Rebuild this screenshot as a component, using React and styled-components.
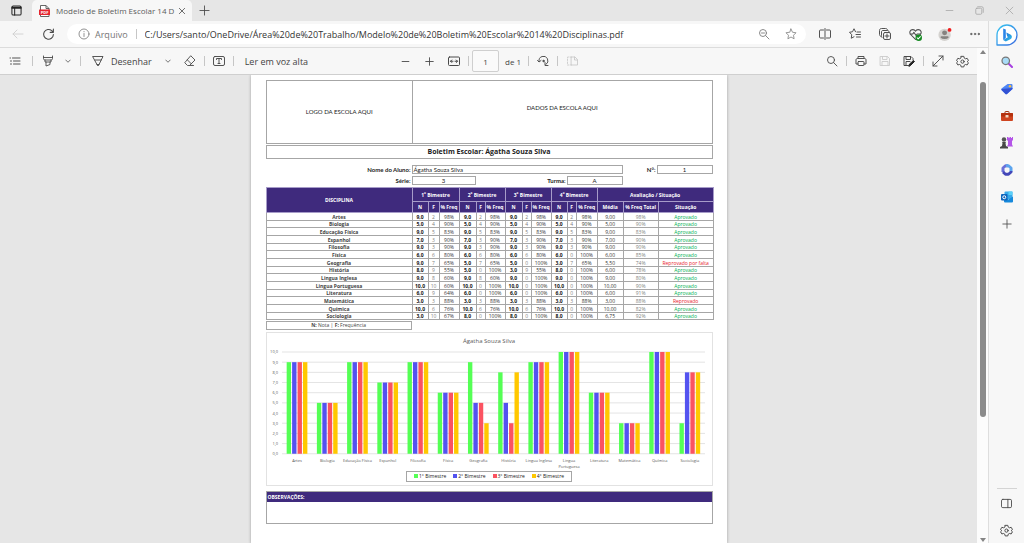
import React, { useState } from "react";
import styled, { createGlobalStyle } from "styled-components";

const purple = "#3f2a7d";
const line = "#a6a6a6";

const GlobalStyle = createGlobalStyle`
  * {
    box-sizing: border-box;
  }
  body {
    margin: 0;
    background: #e6e6e6;
    color: #444;
    font-family: "Open Sans", "Noto Sans", sans-serif;
    font-size: 9px;
  }
  button, input {
    font: inherit;
    color: inherit;
  }
`;

const Window = styled.div`
  display: flex;
  flex-direction: column;
  height: 100vh;
  overflow: hidden;
`;

const TitleBar = styled.header`
  display: flex;
  flex: none;
  height: 21px;
  background: #e6e6e6;
`;

const IconButton = styled.button`
  display: flex;
  flex: none;
  align-items: center;
  justify-content: center;
  width: ${(p) => p.$w || 24}px;
  height: ${(p) => p.$h || 20}px;
  padding: 0;
  border: none;
  background: none;
  color: ${(p) => p.$color || "#4a4a4a"};
`;

const Tab = styled.div`
  display: flex;
  align-items: center;
  min-width: 160px;
  padding: 0 3px 0 7px;
  border-radius: 5px 5px 0 0;
  background: #f7f7f7;
`;

const TabTitle = styled.span`
  margin: 0 auto 0 6px;
  white-space: nowrap;
  font-size: 8px;
  color: #5c5c5c;
`;

const Controls = styled.div`
  display: flex;
  margin-left: auto;
`;

const Body = styled.div`
  display: flex;
  flex: 1;
  min-height: 0;
`;

const Main = styled.div`
  display: flex;
  flex: 1;
  flex-direction: column;
  min-width: 0;
  border-right: 1px solid #dedede;
`;

const AddressRow = styled.div`
  display: flex;
  flex: none;
  align-items: center;
  height: 26px;
  padding: 0 6px 0 3px;
  background: #f7f7f7;
`;

const AddressBox = styled.label`
  display: flex;
  flex: 1;
  align-items: center;
  height: 20px;
  margin: 0 12px 0 4px;
  padding: 0 2px 0 11px;
  border-radius: 10px;
  background: #fff;
`;

const Scheme = styled.span`
  margin: 0 6px 0 5px;
  color: #767676;
`;

const Url = styled.input`
  flex: 1;
  min-width: 0;
  margin-left: 6px;
  padding: 0;
  border: none;
  outline: none;
  background: none;
  color: #333;
`;

const BrowserActions = styled.div`
  display: flex;
  gap: 16px;
`;

const Content = styled.div`
  display: flex;
  flex: 1;
  min-height: 0;
  border-top: 1px solid #dcdcdc;
`;

const Reader = styled.div`
  display: flex;
  flex: 1;
  flex-direction: column;
  min-width: 0;
`;

const Toolbar = styled.div`
  display: flex;
  flex: none;
  align-items: center;
  height: 27px;
  border-bottom: 1px solid #cfcfcf;
  background: #f7f7f7;
`;

const ToolGroup = styled.div`
  display: flex;
  flex: ${(p) => (p.$side ? "1" : "none")};
  align-items: center;
  justify-content: ${(p) => (p.$side === "right" ? "flex-end" : "flex-start")};
  padding-left: ${(p) => (p.$side ? 0 : 4)}px;
  padding-right: ${(p) => (p.$side === "right" ? 3 : 0)}px;
`;

const Split = styled.div`
  display: flex;
  align-items: center;
  margin-right: 3px;
`;

const Sep = styled.i`
  width: 1px;
  height: 10px;
  margin: 0 2px;
  background: #c6c6c6;
`;

const TextButton = styled.button`
  display: flex;
  align-items: center;
  gap: 7px;
  padding: 0 9px;
  border: none;
  background: none;
  white-space: nowrap;
`;

const PageInput = styled.input`
  width: 27px;
  height: 22px;
  margin-left: 1px;
  padding: 0;
  border: 1px solid #cfcfcf;
  border-radius: 2px;
  background: #fafafa;
  text-align: center;
  font-size: 8px;
`;

const PageCount = styled.span`
  padding: 0 5px 0 6px;
  font-size: 8px;
`;

const Viewer = styled.main`
  flex: 1;
  min-height: 0;
  overflow: hidden;
  background: #e6e6e6;
`;

const ScrollTrack = styled.div`
  display: flex;
  flex: none;
  flex-direction: column;
  align-items: center;
  justify-content: space-between;
  width: 11px;
  padding: 2px 0 1px;
  background: #fcfcfc;
  color: #858585;
`;

const ScrollThumb = styled.div`
  width: 6px;
  height: 68%;
  margin: 28px 0 auto;
  border-radius: 3px;
  background: #8b8b8b;
`;

const Sidebar = styled.aside`
  display: flex;
  flex: none;
  flex-direction: column;
  align-items: center;
  width: 35px;
  background: #f7f7f7;
`;

const SidebarFoot = styled.div`
  margin-top: auto;
  border-top: 1px solid #d4d4d4;
`;

/* document */

const Page = styled.article`
  width: 476px;
  max-width: 100%;
  min-height: 100%;
  margin: 0 auto;
  padding: 5px 14px 20px 15px;
  background: #fff;
  box-shadow: 0 0 3px rgba(0, 0, 0, 0.3);
  color: #222;
  font-size: 5px;
  line-height: 6px;
`;

const Letterhead = styled.div`
  display: grid;
  grid-template-columns: 146fr 301fr;
  height: 64px;
  border: 1px solid ${line};
  font-family: Lato, "Open Sans", sans-serif;
  font-size: 6px;
`;

const LetterCell = styled.div`
  display: flex;
  align-items: center;
  justify-content: center;
  padding-bottom: ${(p) => (p.$raised ? 8 : 0)}px;

  & + & {
    border-left: 1px solid ${line};
  }
`;

const ReportTitle = styled.h1`
  margin: 1px 0 6px;
  border: 1px solid ${line};
  text-align: center;
  font-size: 7px;
  line-height: 12px;
`;

const Fields = styled.dl`
  display: grid;
  grid-template-columns: 146fr 64fr 91fr 56fr 34fr 56fr;
  gap: 2px 0;
  margin: 0 0 2px;
  font-family: Lato, "Open Sans", sans-serif;
  font-size: 6px;
`;

const FieldName = styled.dt`
  padding-right: 1px;
  text-align: right;
  font-weight: 700;
  line-height: 9px;
`;

const FieldValue = styled.dd`
  grid-column: span ${(p) => p.$span || 1};
  margin: 0;
  padding-left: ${(p) => (p.$span ? 1 : 0)}px;
  border: 1px solid ${line};
  text-align: ${(p) => (p.$span ? "left" : "center")};
  line-height: 7px;
`;

const Grades = styled.table`
  width: 100%;
  table-layout: fixed;
  border-collapse: collapse;
  text-align: center;

  th,
  td {
    padding: 0;
    border: 1px solid ${line};
    white-space: nowrap;
    line-height: 6px;
  }

  thead th {
    border-color: #a79cc9;
    background: ${purple};
    color: #fff;
  }

  thead tr {
    height: 11px;
  }

  thead tr:first-child {
    height: 14px;
  }

  tbody tr {
    height: 8px;
  }

  tbody tr:nth-child(3n + 2) {
    height: 7px;
  }

  tbody th {
    color: #444;
  }

  sup {
    font-size: 3px;
    line-height: 1px;
  }
`;

const Grade = styled.td`
  font-weight: 700;
  color: #111;
`;

const Absences = styled.td`
  color: #7f7f7f;
`;

const Frequency = styled.td`
  color: #333;
`;

const Status = styled.td`
  color: ${(p) => (p.$failed ? "#e8202c" : "#00b050")};
`;

const Note = styled.p`
  width: 32.7%;
  margin: 1px 0 2px;
  border: 1px solid ${line};
  text-align: center;
  color: #444;
  line-height: 7px;
`;

const ChartBox = styled.figure`
  display: flex;
  flex-direction: column;
  align-items: center;
  margin: 0;
  padding-bottom: 3px;
  border: 1px solid #e2e2e2;
`;

const ChartTitle = styled.figcaption`
  padding-top: 2px;
  color: #595959;
  font-size: 6px;
  line-height: 13px;
`;

const Plot = styled.svg`
  display: block;
  width: 100%;

  text {
    fill: #595959;
    font-size: 4px;
  }
`;

const Legend = styled.ul`
  display: flex;
  gap: 7px;
  margin: 1px 0 0;
  padding: 0 7px;
  border: 1px solid ${line};
  list-style: none;
  line-height: 9px;

  li {
    display: flex;
    align-items: center;
    gap: 1px;
  }
`;

const Swatch = styled.i`
  width: 4px;
  height: 4px;
  background: ${(p) => p.$color};
`;

const Notes = styled.section`
  height: 33px;
  margin-top: 5px;
  border: 1px solid ${line};
`;

const NotesTitle = styled.h2`
  margin: 0;
  padding-left: 1px;
  background: ${purple};
  color: #fff;
  font-size: 5px;
  line-height: 10px;
`;

const Icon = ({ size = 12, width = 1.5, children, ...rest }) => (
  <svg
    width={size}
    height={size}
    viewBox="0 0 24 24"
    fill="none"
    stroke="currentColor"
    strokeWidth={width}
    strokeLinecap="round"
    strokeLinejoin="round"
    aria-hidden="true"
    {...rest}
  >
    {children}
  </svg>
);

const Chevron = () => (
  <Icon size={6} width={3}>
    <path d="M3 8l9 9 9-9" />
  </Icon>
);

const Gear = ({ size = 13 }) => (
  <Icon size={size} width={1.8}>
    <path d="M9.6 2.5h4.800l.8 3.200 2.200 1.300 3.200-.9L23 10.200l-2.400 2 2.400 2.100-2.400 4.100-3.200-.9-2.200 1.300-.8 3.200H9.600l-.8-3.200-2.200-1.300-3.200.9L1 14.300l2.400-2.100L1 10.200l2.400-4.100 3.200.9 2.200-1.300z" />
    <circle cx="12" cy="12.2" r="3" />
  </Icon>
);

const Magnifier = ({ minus }) => (
  <Icon size={12} width={1.8}>
    <circle cx="10" cy="10" r="7" />
    <path d="M15.500 15.500L22 22" />
    {minus && <path d="M7 10h6" />}
  </Icon>
);

const Bing = () => (
  <svg width="22" height="22" viewBox="0 0 22 22" aria-hidden="true">
    <defs>
      <linearGradient id="ring" x1="0" y1="0" x2="1" y2="1">
        <stop offset="0" stopColor="#35c5f0" />
        <stop offset="1" stopColor="#3b6be0" />
      </linearGradient>
      <linearGradient id="bee" x1="0" y1="0" x2="1" y2="1">
        <stop offset="0" stopColor="#1b66d8" />
        <stop offset="1" stopColor="#35c8e8" />
      </linearGradient>
    </defs>
    <path d="M1 21V11a10 10 0 1 1 10 10z" fill="#fff" stroke="url(#ring)" strokeWidth="1.3" strokeLinejoin="round" />
    <path d="M7.200 4.500l2.600 1v8.600l-2.600 2z" fill="#2a85e8" />
    <path d="M10.300 8.600l4.100 1.800c1.400.7 1.900 2.200 1.200 3.600-.3.500-.7.900-1.200 1.200L9.800 17.400l-2.600-1.300 5-3-1-.6z" fill="url(#bee)" />
  </svg>
);

const subjects = [
  ["Artes", [[9, 2, 98], [9, 2, 98], [9, 2, 98], [9, 2, 98]], "9,00", 98],
  ["Biologia", [[5, 4, 90], [5, 4, 90], [5, 4, 90], [5, 4, 90]], "5,00", 90],
  ["Educação Física", [[9, 5, 83], [9, 5, 83], [9, 5, 83], [9, 5, 83]], "9,00", 83],
  ["Espanhol", [[7, 3, 90], [7, 3, 90], [7, 3, 90], [7, 3, 90]], "7,00", 90],
  ["Filosofia", [[9, 3, 90], [9, 3, 90], [9, 3, 90], [9, 3, 90]], "9,00", 90],
  ["Física", [[6, 6, 80], [6, 6, 80], [6, 6, 80], [6, 0, 100]], "6,00", 85],
  ["Geografia", [[9, 7, 65], [5, 7, 65], [5, 0, 100], [3, 7, 65]], "5,50", 74, "Reprovado por falta"],
  ["História", [[8, 9, 55], [5, 0, 100], [3, 9, 55], [8, 0, 100]], "6,00", 78],
  ["Lingua Inglesa", [[9, 8, 60], [9, 8, 60], [9, 0, 100], [9, 0, 100]], "9,00", 80],
  ["Lingua Portuguesa", [[10, 10, 60], [10, 0, 100], [10, 0, 100], [10, 0, 100]], "10,00", 90],
  ["Literatura", [[6, 9, 64], [6, 0, 100], [6, 0, 100], [6, 0, 100]], "6,00", 91],
  ["Matemática", [[3, 3, 88], [3, 3, 88], [3, 3, 88], [3, 3, 88]], "3,00", 88, "Reprovado"],
  ["Química", [[10, 6, 76], [10, 6, 76], [10, 6, 76], [10, 0, 100]], "10,00", 82],
  ["Sociologia", [[3, 10, 67], [8, 0, 100], [8, 0, 100], [8, 0, 100]], "6,75", 92],
];

const columns = [146, 16, 11, 20, 17, 9, 20, 17, 9, 20, 16, 9, 21, 26, 35, 55];
const terms = [1, 2, 3, 4];
const barColors = ["#55ff55", "#5353f0", "#fb5361", "#ffc800"];

const GradesTable = () => (
  <Grades>
    <colgroup>
      {columns.map((w, i) => (
        <col key={i} width={w} />
      ))}
    </colgroup>
    <thead>
      <tr>
        <th rowSpan={2}>DISCIPLINA</th>
        {terms.map((t) => (
          <th key={t} colSpan={3}>
            {t}
            <sup>o</sup> Bimestre
          </th>
        ))}
        <th colSpan={3}>Avaliação / Situação</th>
      </tr>
      <tr>
        {terms.map((t) => (
          <React.Fragment key={t}>
            <th>N</th>
            <th>F</th>
            <th>% Freq</th>
          </React.Fragment>
        ))}
        <th>Média</th>
        <th>% Freq Total</th>
        <th>Situação</th>
      </tr>
    </thead>
    <tbody>
      {subjects.map(([name, marks, average, total, status]) => (
        <tr key={name}>
          <th>{name}</th>
          {marks.map(([n, f, freq], i) => (
            <React.Fragment key={i}>
              <Grade>{n},0</Grade>
              <Absences>{f}</Absences>
              <Frequency>{freq}%</Frequency>
            </React.Fragment>
          ))}
          <Frequency>{average}</Frequency>
          <Absences>{total}%</Absences>
          <Status $failed={!!status}>{status || "Aprovado"}</Status>
        </tr>
      ))}
    </tbody>
  </Grades>
);

const step = 424 / subjects.length;

const Chart = () => (
  <ChartBox>
    <ChartTitle>Ágatha Souza Silva</ChartTitle>
    <Plot viewBox="0 0 446 122">
      {Array.from({ length: 11 }, (_, v) => (
        <g key={v}>
          <path d={`M15 ${106 - v * 10.2}H439`} stroke="#dcdcdc" strokeWidth="0.8" />
          <text x="11" y={107.5 - v * 10.2} textAnchor="end">
            {v},0
          </text>
        </g>
      ))}
      {subjects.map(([name, marks], s) => {
        const x = 15 + s * step;
        const words = name === "Lingua Portuguesa" ? name.split(" ") : [name];
        return (
          <g key={name}>
            {marks.map(([n], i) => (
              <rect
                key={i}
                x={x + 4.7 + i * 5.45}
                y={106 - n * 10.2}
                width="4.4"
                height={n * 10.2}
                fill={barColors[i]}
              />
            ))}
            {words.map((word, i) => (
              <text key={word} x={x + step / 2} y={114 + i * 6} textAnchor="middle">
                {word}
              </text>
            ))}
          </g>
        );
      })}
    </Plot>
    <Legend>
      {terms.map((t) => (
        <li key={t}>
          <Swatch $color={barColors[t - 1]} />
          {t}° Bimestre
        </li>
      ))}
    </Legend>
  </ChartBox>
);

const Report = () => (
  <Page>
    <Letterhead>
      <LetterCell>LOGO DA ESCOLA AQUI</LetterCell>
      <LetterCell $raised>DADOS DA ESCOLA AQUI</LetterCell>
    </Letterhead>
    <ReportTitle>Boletim Escolar: Ágatha Souza Silva</ReportTitle>
    <Fields>
      <FieldName>Nome do Aluno:</FieldName>
      <FieldValue $span={3}>Ágatha Souza Silva</FieldValue>
      <FieldName>N°:</FieldName>
      <FieldValue>1</FieldValue>
      <FieldName>Série:</FieldName>
      <FieldValue>3</FieldValue>
      <FieldName>Turma:</FieldName>
      <FieldValue>A</FieldValue>
    </Fields>
    <GradesTable />
    <Note>
      <b>N:</b> Nota | <b>F:</b> Frequência
    </Note>
    <Chart />
    <Notes>
      <NotesTitle>OBSERVAÇÕES:</NotesTitle>
    </Notes>
  </Page>
);

const PdfToolbar = () => {
  const [page, setPage] = useState("1");

  return (
    <Toolbar>
      <ToolGroup $side="left">
        <IconButton $w={30} aria-label="Sumário">
          <Icon width={1.9}>
            <path d="M7 6h15M9 12h13M9 18h13M2 6h1M3 12h2M3 18h2" />
          </Icon>
        </IconButton>
        <Sep />
        <Split>
          <IconButton $w={26} aria-label="Realçar">
            <Icon width={1.8}>
              <path d="M3 2v5c0 2 1 3 3 3h12c2 0 3-1 3-3V2M3 5h18M6 10v4h12v-4M8 14v8l8-3v-5" />
            </Icon>
          </IconButton>
          <IconButton $w={14} aria-label="Cores">
            <Chevron />
          </IconButton>
        </Split>
        <Sep />
        <Split>
          <TextButton>
            <Icon width={1.8}>
              <path d="M2 3h20l-8 16-2 3-2-3zM6 10h12M10 19h4" />
            </Icon>
            Desenhar
          </TextButton>
          <IconButton $w={14} aria-label="Opções de desenho">
            <Chevron />
          </IconButton>
        </Split>
        <IconButton aria-label="Apagar">
          <Icon width={1.8}>
            <path d="M14 2l8 8-11 11H7l-5-5zM7 10l8 8M11 21h8" />
          </Icon>
        </IconButton>
        <Sep />
        <IconButton aria-label="Adicionar texto">
          <Icon width={1.9}>
            <rect x="1" y="3" width="22" height="18" rx="3" />
            <path d="M7 9V7h10v2M12 7v10M10 17h4" />
          </Icon>
        </IconButton>
        <Sep />
        <TextButton>Ler em voz alta</TextButton>
      </ToolGroup>
      <ToolGroup>
        <IconButton aria-label="Reduzir">
          <Icon size={9} width={2.4}>
            <path d="M3 12h18" />
          </Icon>
        </IconButton>
        <IconButton aria-label="Ampliar">
          <Icon size={9} width={2.4}>
            <path d="M2 12h20M12 2v20" />
          </Icon>
        </IconButton>
        <IconButton aria-label="Ajustar à largura">
          <Icon width={2}>
            <rect x="1" y="4" width="22" height="17" rx="2" />
            <path d="M5 12.500h5M14 12.500h5M7.500 10L5 12.500 7.500 15M16.500 10l2.500 2.500-2.500 2.500" />
          </Icon>
        </IconButton>
        <Sep />
        <PageInput aria-label="Página" value={page} onChange={(e) => setPage(e.target.value)} />
        <PageCount>de 1</PageCount>
        <Sep />
        <IconButton aria-label="Girar">
          <Icon width={1.9}>
            <path d="M1 11l3 3 4-3M4 13a9 9 0 1 1 14 6M16 15v6h6" />
            <circle cx="13" cy="12" r="1.5" fill="currentColor" />
          </Icon>
        </IconButton>
        <Sep />
        <IconButton $color="#c9c9c9" aria-label="Modo de página">
          <Icon width={1.8}>
            <path d="M11 4H3v16h8" strokeDasharray="3 3" />
            <path d="M11 4h7l5 5v11H11zM17 4v6h6" />
          </Icon>
        </IconButton>
      </ToolGroup>
      <ToolGroup $side="right">
        <IconButton aria-label="Localizar">
          <Magnifier />
        </IconButton>
        <Sep />
        <IconButton aria-label="Imprimir">
          <Icon width={1.9}>
            <path d="M6 7V3h12v4M6 18H2v-8c0-2 1-3 3-3h14c2 0 3 1 3 3v8h-4" />
            <rect x="6" y="13" width="12" height="8" rx="1" />
          </Icon>
        </IconButton>
        <IconButton $color="#c9c9c9" aria-label="Salvar">
          <Icon width={1.8}>
            <path d="M3 3h14l4 4v14H3zM7 3v6h9V3M6 21v-8h12v8" />
          </Icon>
        </IconButton>
        <IconButton aria-label="Salvar como">
          <Icon width={2}>
            <path d="M11 21H2V3h14l4 4v3M6 3v6h9V3M6 21v-8h8" />
            <path d="M12 22l1-4 8-7 2 2-8 8z" fill="#222" stroke="#222" />
          </Icon>
        </IconButton>
        <Sep />
        <IconButton aria-label="Tela inteira">
          <Icon width={1.9}>
            <path d="M2 22L22 2M14 2h8v8M2 14v8h8" />
          </Icon>
        </IconButton>
        <IconButton aria-label="Configurações do PDF">
          <Gear />
        </IconButton>
      </ToolGroup>
    </Toolbar>
  );
};

const AddressBar = () => {
  const [url, setUrl] = useState(
    "C:/Users/santo/OneDrive/Área%20de%20Trabalho/Modelo%20de%20Boletim%20Escolar%2014%20Disciplinas.pdf"
  );

  return (
    <AddressRow>
      <IconButton $w={30} $color="#cfcfcf" aria-label="Voltar">
        <Icon width={1.8}>
          <path d="M22 12H2M10 4l-8 8 8 8" />
        </Icon>
      </IconButton>
      <IconButton $w={30} aria-label="Atualizar">
        <Icon size={13} width={2}>
          <path d="M21 12a9 9 0 1 1-3-7l3 3M21 2v6h-6" />
        </Icon>
      </IconButton>
      <AddressBox>
        <Icon color="#767676" width={1.6}>
          <circle cx="12" cy="12" r="10" />
          <path d="M12 11v6M12 7v.5" />
        </Icon>
        <Scheme>Arquivo</Scheme>
        <Sep />
        <Url aria-label="Endereço" value={url} onChange={(e) => setUrl(e.target.value)} />
        <IconButton $w={27} $color="#7d7d7d" aria-label="Zoom">
          <Magnifier minus />
        </IconButton>
        <IconButton $w={27} $color="#7d7d7d" aria-label="Favoritar">
          <Icon width={1.6}>
            <path d="M12 2l3 6.500 7 1-5 5 1.200 7L12 18l-6.200 3.500L7 14.500l-5-5 7-1z" />
          </Icon>
        </IconButton>
      </AddressBox>
      <BrowserActions>
        <IconButton $w={14} aria-label="Dividir tela">
          <Icon width={1.9}>
            <path d="M9 4H3a2 2 0 0 0-2 2v12a2 2 0 0 0 2 2h6M15 4h6a2 2 0 0 1 2 2v12a2 2 0 0 1-2 2h-6M12 1v22" />
          </Icon>
        </IconButton>
        <IconButton $w={14} aria-label="Favoritos">
          <Icon width={1.9}>
            <path d="M13 7.500L10 1.500l-3 6-6 1 4.500 5-1 7L10 17.500M16 8h7M14 13h9M15 18h8" />
          </Icon>
        </IconButton>
        <IconButton $w={14} aria-label="Coleções">
          <Icon width={1.9}>
            <path d="M4 17c-2-1-3-2-3-4V5c0-2 1-4 4-4h8c2 0 4 1 4 3M6 19c-1-1-1-2-1-4V8c0-2 1-3 3-3h9c2 0 3 1 3 3" />
            <rect x="9" y="9" width="14" height="14" rx="3" />
            <path d="M16 12v8M12 16h8" />
          </Icon>
        </IconButton>
        <IconButton $w={14} aria-label="Desempenho">
          <Icon size={13} width={1.9}>
            <path d="M12 21L3 12C0 8 2 3 7 3c2 0 4 1 5 3 1-2 3-3 5-3 5 0 7 5 4 9l-1 1M2 11h5l2-3 4 6 2-3h6" />
            <circle cx="18" cy="18" r="6" fill="#158a22" stroke="none" />
            <path d="M15 18l2 2 4-4" stroke="#fff" />
          </Icon>
        </IconButton>
        <IconButton $w={14} aria-label="Perfil">
          <svg width="17" height="17" viewBox="0 0 17 17">
            <circle cx="8" cy="9" r="7.5" fill="#d4d2cf" />
            <circle cx="8" cy="6.5" r="3" fill="#85827f" />
            <path d="M3 12q0-1.500 1.500-1.500h7q1.500 0 1.500 1.500a6 4.500 0 0 1-10 0" fill="#85827f" />
            <circle cx="14" cy="3" r="2.3" fill="#f01d1d" />
          </svg>
        </IconButton>
        <IconButton $w={14} aria-label="Mais">
          <Icon size={10} fill="currentColor" width={1}>
            <circle cx="3" cy="12" r="2" />
            <circle cx="12" cy="12" r="2" />
            <circle cx="21" cy="12" r="2" />
          </Icon>
        </IconButton>
      </BrowserActions>
    </AddressRow>
  );
};

const EdgeSidebar = () => (
  <Sidebar>
    <IconButton $w={35} $h={27} aria-label="Bing">
      <Bing />
    </IconButton>
    <IconButton $w={35} $h={27} aria-label="Pesquisar">
      <svg width="12" height="12" viewBox="0 0 24 24">
        <path d="M14 14l8 8" stroke="#a63fe0" strokeWidth="4" strokeLinecap="round" />
        <circle cx="9.5" cy="9.5" r="7.5" fill="#a9dcf7" stroke="#777" strokeWidth="2.5" />
      </svg>
    </IconButton>
    <IconButton $w={35} $h={27} aria-label="Compras">
      <svg width="12" height="12" viewBox="0 0 24 24">
        <path d="M13 2h8q2 0 2 2v8L12 22q-2 1-3 0l-8-8q-1-1 0-3z" fill="#4f86f5" />
        <path d="M1 12l22-2v2L12 22q-2 1-3 0l-8-8z" fill="#3352d4" />
        <circle cx="18" cy="6.5" r="2.5" fill="#f5c045" />
      </svg>
    </IconButton>
    <IconButton $w={35} $h={27} aria-label="Ferramentas">
      <svg width="12" height="12" viewBox="0 0 24 24">
        <path d="M8 7V4q0-1 1-1h6q1 0 1 1v3" fill="none" stroke="#a33715" strokeWidth="2" />
        <rect x="0" y="6" width="24" height="16" rx="2" fill="#cf4520" />
        <rect x="0" y="6" width="24" height="7" rx="2" fill="#b5320f" />
        <rect x="9" y="10" width="6" height="5" rx="1" fill="#f3d9c4" />
      </svg>
    </IconButton>
    <IconButton $w={35} $h={27} aria-label="Jogos">
      <svg width="13" height="13" viewBox="0 0 26 26">
        <path d="M14 2h3v2h2V2h3v2h2V2h2v6l-2 2v7l2 4H14l2-4v-7l-2-2z" fill="#b455e8" />
        <circle cx="8" cy="7" r="4.5" fill="#555" />
        <path d="M4 12h8l-1 2 1 6 4 2v3H0v-3l4-2 1-6z" fill="#484848" />
      </svg>
    </IconButton>
    <IconButton $w={35} $h={27} aria-label="Microsoft 365">
      <svg width="12" height="12" viewBox="0 0 24 24" fill="none" strokeWidth="6" strokeLinejoin="round">
        <path d="M14 3.500H9L4 8v8" stroke="#6a6fd8" />
        <path d="M10 3.500h5L20 8v7" stroke="#5ba4ee" />
        <path d="M20 14v2l-5 4.500H9L4 16" stroke="#4347b8" />
      </svg>
    </IconButton>
    <IconButton $w={35} $h={27} aria-label="Outlook">
      <svg width="12" height="12" viewBox="0 0 24 24">
        <rect x="7" y="1" width="16" height="15" rx="2" fill="#36a9ea" />
        <rect x="15" y="1" width="8" height="7" fill="#5bd0f8" />
        <path d="M6 11l9 6 9-6v10q0 2-2 2H8q-2 0-2-2z" fill="#1689dc" />
        <rect x="0" y="6" width="13" height="13" rx="2" fill="#0f66bd" />
        <circle cx="6.5" cy="12.5" r="3" fill="none" stroke="#fff" strokeWidth="2" />
      </svg>
    </IconButton>
    <IconButton $w={35} $h={27} aria-label="Adicionar">
      <Icon size={10} width={2}>
        <path d="M2 12h20M12 2v20" />
      </Icon>
    </IconButton>
    <SidebarFoot>
      <IconButton $w={20} $h={28} aria-label="Ocultar barra lateral">
        <Icon size={11} width={2}>
          <rect x="1" y="3" width="22" height="18" rx="3" />
          <path d="M15 3v18" />
        </Icon>
      </IconButton>
      <IconButton $w={20} $h={26} aria-label="Configurações">
        <Gear />
      </IconButton>
    </SidebarFoot>
  </Sidebar>
);

const App = () => {
  return (
    <Window>
      <GlobalStyle />
      <TitleBar>
        <IconButton $w={32} aria-label="Espaços de trabalho">
          <Icon size={11} width={2.2} color="#222">
            <rect x="2" y="2" width="20" height="20" rx="3" />
            <path d="M2 5h20M2 7h20M8 8v14" />
          </Icon>
        </IconButton>
        <Tab>
          <svg width="11" height="12" viewBox="0 0 22 24" aria-hidden="true">
            <path d="M3 1h11l6 6v16H3z" fill="#fff" stroke="#555" strokeWidth="1.8" />
            <path d="M14 1v6h6" fill="none" stroke="#555" strokeWidth="1.8" />
            <rect y="9" width="22" height="11" rx="1" fill="#e5252f" />
            <text x="11" y="17" textAnchor="middle" fontSize="8" fontWeight="700" fill="#fff">
              PDF
            </text>
          </svg>
          <TabTitle>Modelo de Boletim Escolar 14 D</TabTitle>
          <IconButton $w={14} aria-label="Fechar guia">
            <Icon size={8} width={2.4}>
              <path d="M4 4l16 16M20 4L4 20" />
            </Icon>
          </IconButton>
        </Tab>
        <IconButton aria-label="Nova guia">
          <Icon size={11} width={1.9}>
            <path d="M2 12h20M12 2v20" />
          </Icon>
        </IconButton>
        <Controls>
          <IconButton $w={30} $color="#a3a3a3" aria-label="Minimizar">
            <Icon size={9} width={2}>
              <path d="M3 12h18" />
            </Icon>
          </IconButton>
          <IconButton $w={30} $color="#a3a3a3" aria-label="Restaurar">
            <Icon size={9} width={2}>
              <rect x="2" y="6" width="16" height="16" rx="3" />
              <path d="M7 2h11q4 0 4 4v11" />
            </Icon>
          </IconButton>
          <IconButton $w={30} $color="#a3a3a3" aria-label="Fechar">
            <Icon size={9} width={2}>
              <path d="M3 3l18 18M21 3L3 21" />
            </Icon>
          </IconButton>
        </Controls>
      </TitleBar>
      <Body>
        <Main>
          <AddressBar />
          <Content>
            <Reader>
              <PdfToolbar />
              <Viewer>
                <Report />
              </Viewer>
            </Reader>
            <ScrollTrack>
              <svg width="6" height="4" viewBox="0 0 6 4">
                <path d="M0 4l3-4 3 4z" fill="currentColor" />
              </svg>
              <ScrollThumb />
              <svg width="6" height="4" viewBox="0 0 6 4">
                <path d="M0 0l3 4 3-4z" fill="currentColor" />
              </svg>
            </ScrollTrack>
          </Content>
        </Main>
        <EdgeSidebar />
      </Body>
    </Window>
  );
};

export default App;
